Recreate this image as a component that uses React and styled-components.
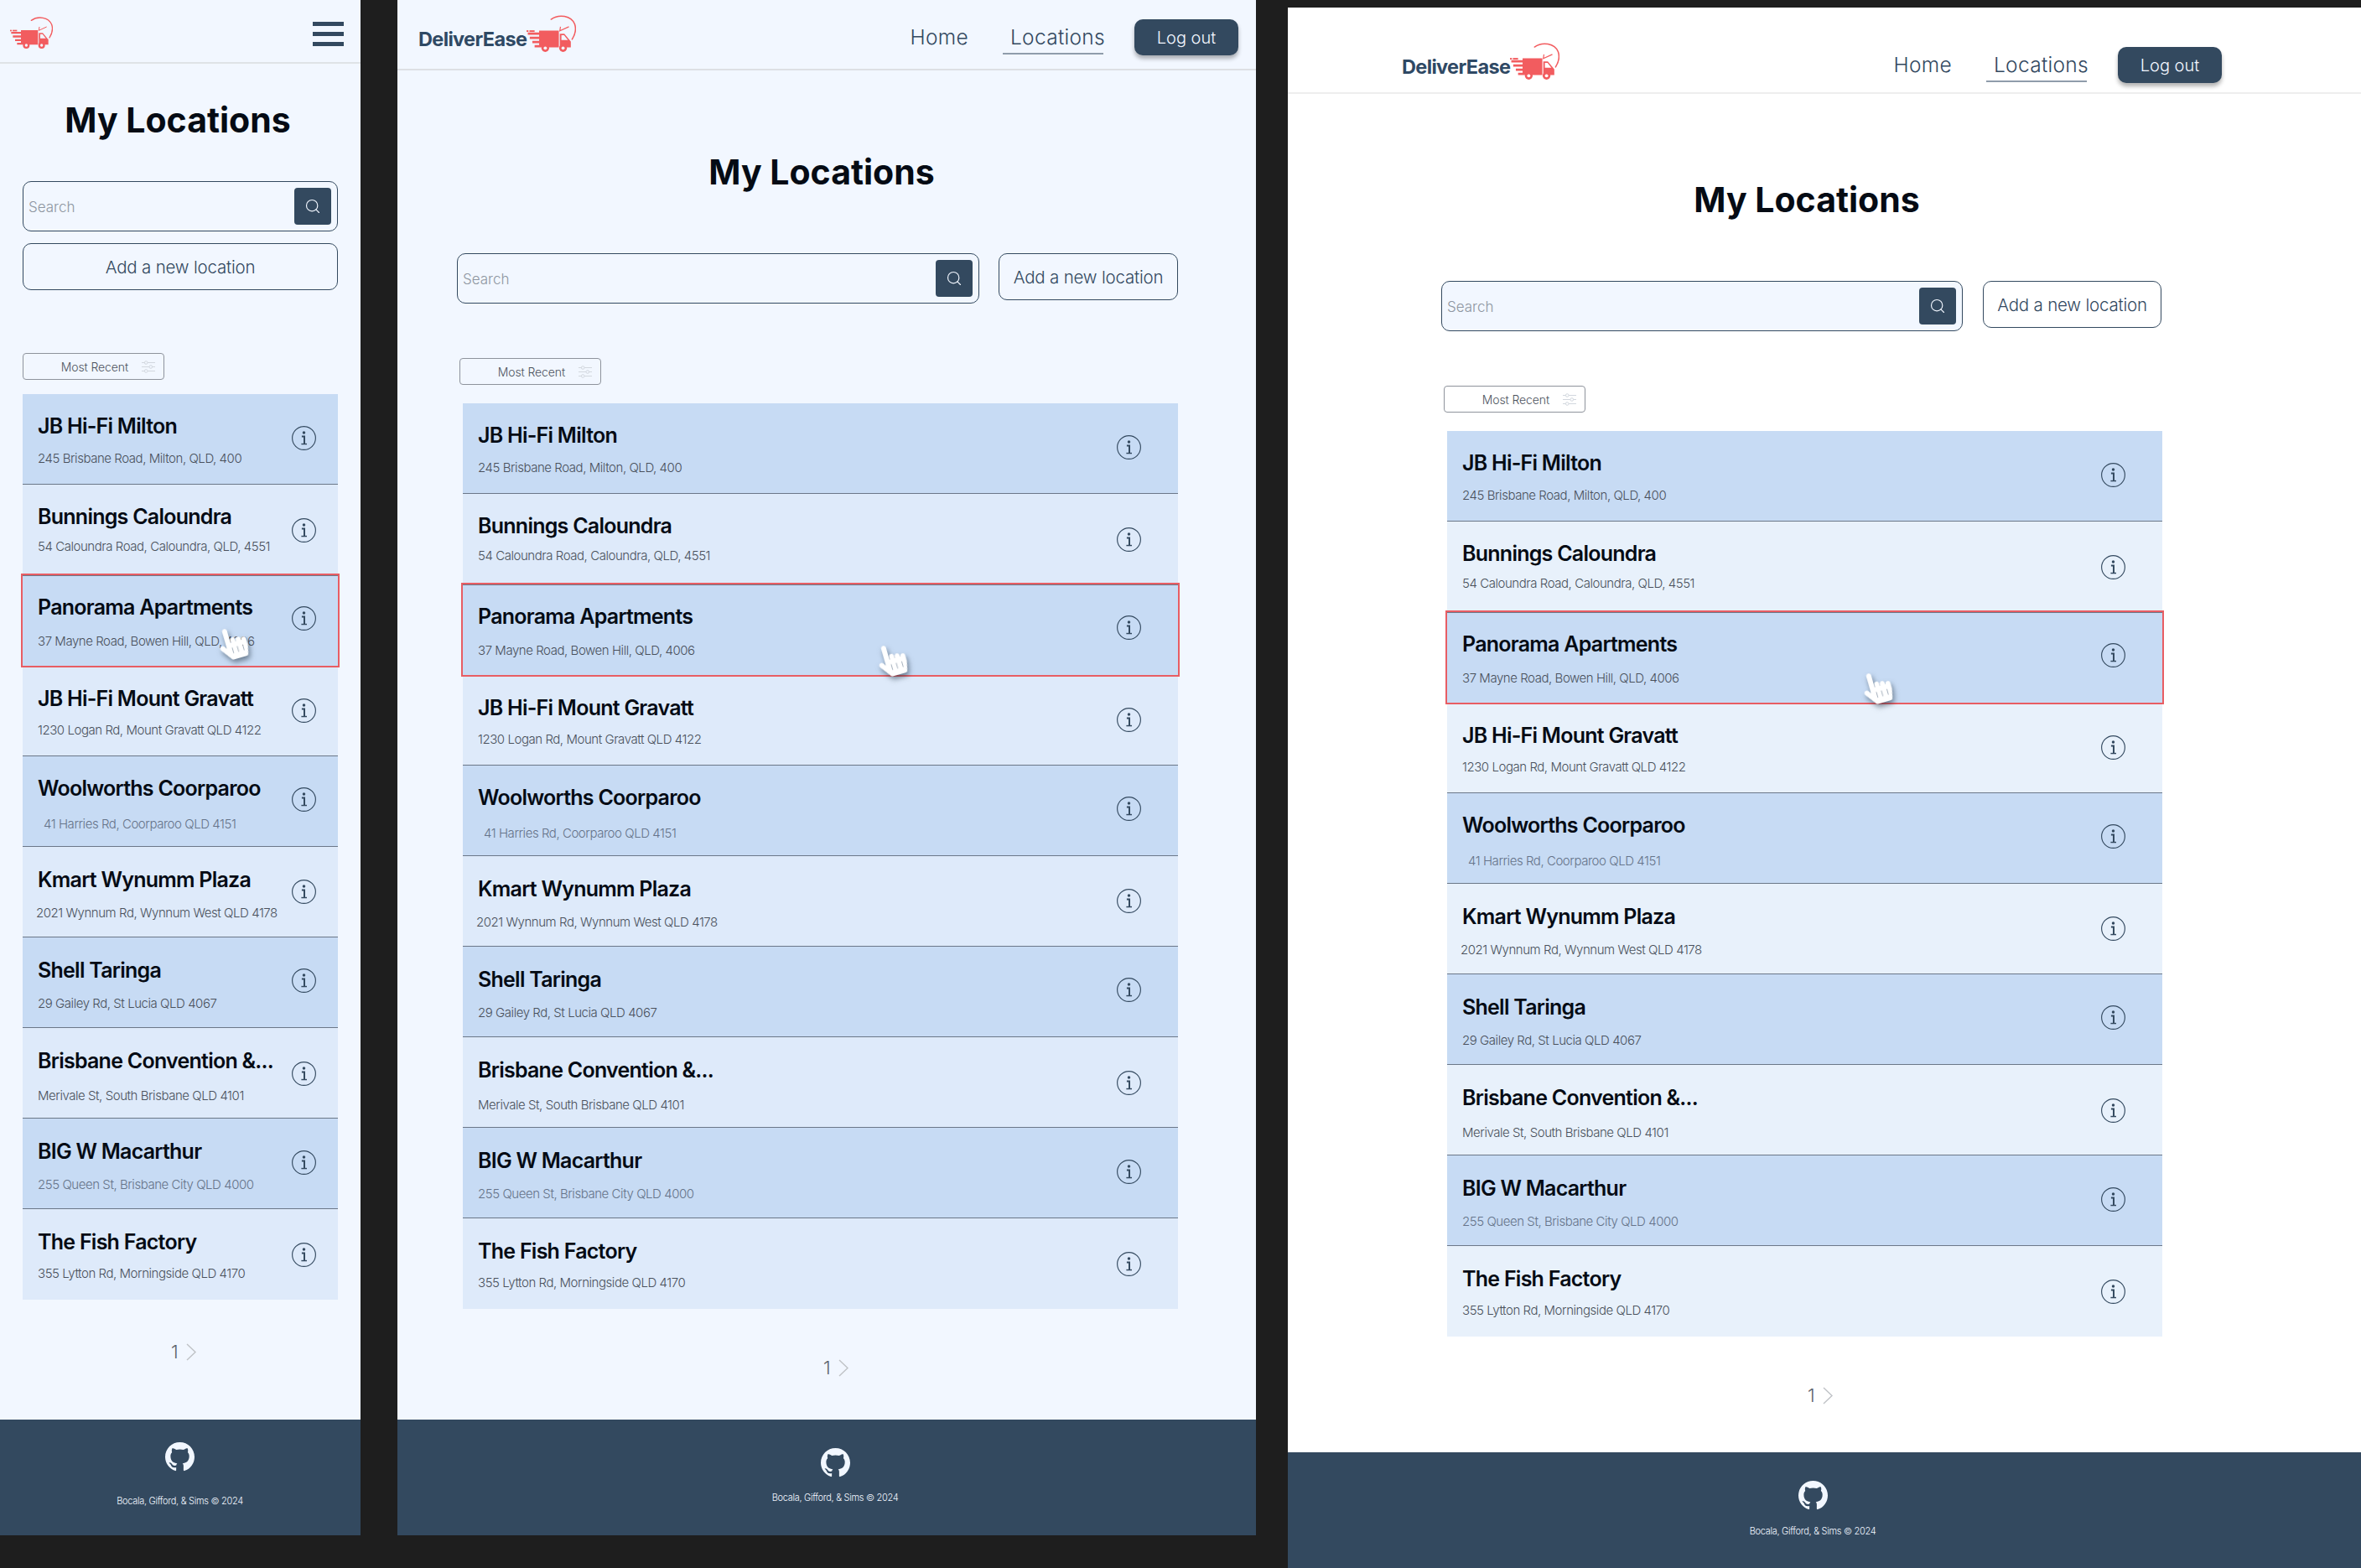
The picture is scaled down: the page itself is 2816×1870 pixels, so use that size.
import React from 'react';
import styled, { createGlobalStyle } from 'styled-components';
import { Search } from 'lucide-react';
import { BsGithub } from 'react-icons/bs';
import { FaHandPointer } from 'react-icons/fa';

const navy = '#33495f';
const red = '#f25c5f';

const GlobalStyle = createGlobalStyle`
  html, body {
    margin: 0;
    padding: 0;
    background: #1e1e1e;
  }
  * {
    box-sizing: border-box;
  }
`;

// measurements for each of the three mockups
const mobile = {
  width: 430, height: 1831, top: 0, page: '#f2f7ff', rowLight: '#deeafa', headerLine: '#dfe3e6',
  headerHeight: 74, headerTop: 20, headerLeft: 12, headerRight: 20,
  titleWidth: 424, titleGap: 37, searchGap: 43, direction: 'column', controlGap: 14,
  searchLeft: 27, searchWidth: 376, addWidth: 376,
  sortLeft: 27, sortGap: 75, listGap: 17, listLeft: 27, listWidth: 376, iconRight: 26,
  handLeft: 232, handTop: 62, pagerGap: 47, pagerLeft: 204,
  footerHeight: 138, footerTop: 27, footerGap: 27, footerLeft: 0, footerRight: 1,
};

const tablet = {
  width: 1024, height: 1831, top: 0, page: '#f2f7ff', rowLight: '#deeafa', headerLine: '#dde0e4',
  headerHeight: 82, headerTop: 23, headerLeft: 25, headerRight: 21,
  titleWidth: 1012, titleGap: 91, searchGap: 67, direction: 'row', controlGap: 23,
  searchLeft: 71, searchWidth: 623, addWidth: 214,
  sortLeft: 74, sortGap: 65, listGap: 22, listLeft: 78, listWidth: 853, iconRight: 44,
  handLeft: 493, handTop: 71, pagerGap: 55, pagerLeft: 508,
  footerHeight: 138, footerTop: 34, footerGap: 16, footerLeft: 20, footerRight: 0,
};

const desktop = {
  width: 1280, height: 1861, top: 9, page: '#ffffff', rowLight: '#e8f1fb', headerLine: '#eeeeee',
  headerHeight: 101, headerTop: 47, headerLeft: 136, headerRight: 166,
  titleWidth: 1238, titleGap: 96, searchGap: 67, direction: 'row', controlGap: 24,
  searchLeft: 183, searchWidth: 622, addWidth: 213,
  sortLeft: 186, sortGap: 65, listGap: 22, listLeft: 190, listWidth: 853, iconRight: 44,
  handLeft: 494, handTop: 71, pagerGap: 55, pagerLeft: 620,
  footerHeight: 138, footerTop: 34, footerGap: 17, footerLeft: 0, footerRight: 28,
};

const locations = [
  { name: 'JB Hi-Fi Milton', address: '245 Brisbane Road, Milton, QLD, 400', titleTop: 23, gap: 14, iconTop: 38 },
  { name: 'Bunnings Caloundra', address: '54 Caloundra Road, Caloundra, QLD, 4551', titleTop: 23, gap: 11, iconTop: 40, light: true },
  { name: 'Panorama Apartments', address: '37 Mayne Road, Bowen Hill, QLD, 4006', titleTop: 23, gap: 16, iconTop: 37, active: true },
  { name: 'JB Hi-Fi Mount Gravatt', address: '1230 Logan Rd, Mount Gravatt QLD 4122', titleTop: 24, gap: 13, iconTop: 39, light: true },
  { name: 'Woolworths Coorparoo', address: '41 Harries Rd, Coorparoo QLD 4151', titleTop: 23, gap: 18, iconTop: 37, indent: 7, muted: true },
  { name: 'Kmart Wynumm Plaza', address: '2021 Wynnum Rd, Wynnum West QLD 4178', titleTop: 24, gap: 15, iconTop: 39, indent: -2, light: true },
  { name: 'Shell Taringa', address: '29 Gailey Rd, St Lucia QLD 4067', titleTop: 24, gap: 15, iconTop: 37 },
  { name: 'Brisbane Convention &...', address: 'Merivale St, South Brisbane QLD 4101', titleTop: 24, gap: 17, iconTop: 40, light: true },
  { name: 'BIG W Macarthur', address: '255 Queen St, Brisbane City QLD 4000', titleTop: 24, gap: 15, iconTop: 38, muted: true },
  { name: 'The Fish Factory', address: '355 Lytton Rd, Morningside QLD 4170', titleTop: 24, gap: 13, iconTop: 40, light: true, last: true },
];

const Canvas = styled.div`
  display: flex;
  align-items: flex-start;
  gap: 44px;
  width: 2816px;
  height: 1870px;
  overflow: hidden;
  background: #1e1e1e;
  font-family: Inter, 'Liberation Sans', sans-serif;
`;

const Frame = styled.div`
  display: flex;
  flex-direction: column;
  flex: none;
  width: ${(p) => p.$l.width}px;
  height: ${(p) => p.$l.height}px;
  margin-top: ${(p) => p.$l.top}px;
  margin-right: ${(p) => (p.$l === mobile ? 0 : -6)}px;
  background: ${(p) => p.$l.page};
`;

const Header = styled.header`
  display: flex;
  align-items: flex-start;
  justify-content: space-between;
  flex: none;
  height: ${(p) => p.$l.headerHeight + 2}px;
  padding: ${(p) => p.$l.headerTop}px ${(p) => p.$l.headerRight}px 0 ${(p) => p.$l.headerLeft}px;
  border-bottom: 2px solid ${(p) => p.$l.headerLine};
`;

const Brand = styled.div`
  display: flex;
  align-items: flex-end;
  margin-top: ${(p) => (p.$compact ? 0 : -5)}px;
`;

const BrandName = styled.span`
  font-size: 23.5px;
  font-weight: 700;
  line-height: 30px;
  letter-spacing: -0.65px;
  color: #2f4964;
`;

const Nav = styled.nav`
  display: flex;
  align-items: center;
`;

const NavLink = styled.a`
  position: relative;
  margin-right: ${(p) => p.$gap}px;
  font-size: 24.5px;
  font-weight: 300;
  line-height: 43px;
  letter-spacing: 0.3px;
  color: ${navy};

  ${(p) => p.$current && `
    &::after {
      content: '';
      position: absolute;
      left: -9px;
      right: 2px;
      bottom: 1px;
      height: 2px;
      background: #8f9cab;
    }
  `}
`;

const LogoutButton = styled.button`
  width: 124px;
  height: 43px;
  border: none;
  border-radius: 10px;
  background: ${navy};
  box-shadow: 0 4px 5px rgba(0, 0, 0, 0.3);
  font-family: inherit;
  font-size: 20px;
  font-weight: 300;
  color: #f2f7ff;
`;

const MenuButton = styled.div`
  display: flex;
  flex-direction: column;
  gap: 7px;
  width: 37px;
  margin-top: 6px;
`;

const MenuBar = styled.span`
  height: 5px;
  background: ${navy};
`;

const Title = styled.h1`
  width: ${(p) => p.$l.titleWidth}px;
  margin: ${(p) => p.$l.titleGap}px 0 0;
  font-size: 41px;
  font-weight: 700;
  line-height: 60px;
  text-align: center;
  color: #050b14;
`;

const Controls = styled.div`
  display: flex;
  flex-direction: ${(p) => p.$l.direction};
  align-items: flex-start;
  gap: ${(p) => p.$l.controlGap}px;
  margin: ${(p) => p.$l.searchGap}px 0 0 ${(p) => p.$l.searchLeft}px;
`;

const SearchBox = styled.form`
  display: flex;
  align-items: center;
  width: ${(p) => p.$l.searchWidth}px;
  height: 60px;
  padding: 0 7px 0 6px;
  border: 1.5px solid ${navy};
  border-radius: 10px;
  background: #f2f7ff;
`;

const SearchInput = styled.input`
  flex: 1;
  min-width: 0;
  padding: 2px 0 0;
  border: none;
  outline: none;
  background: transparent;
  font-family: inherit;
  font-size: 17px;
  font-weight: 300;
  color: ${navy};

  &::placeholder {
    color: #8e96a1;
  }
`;

const SearchButton = styled.button`
  display: flex;
  align-items: center;
  justify-content: center;
  flex: none;
  width: 44px;
  height: 44px;
  padding: 0;
  border: none;
  border-radius: 4px;
  background: ${navy};
  color: #f2f7ff;
`;

const AddButton = styled.button`
  width: ${(p) => p.$l.addWidth}px;
  height: 56px;
  padding: 0;
  border: 1.5px solid ${navy};
  border-radius: 10px;
  background: transparent;
  font-family: inherit;
  font-size: 20.5px;
  font-weight: 300;
  letter-spacing: -0.2px;
  color: ${navy};
`;

const SortButton = styled.div`
  display: flex;
  align-items: center;
  justify-content: flex-end;
  gap: 16px;
  width: 169px;
  height: 32px;
  margin: ${(p) => p.$l.sortGap}px 0 0 ${(p) => p.$l.sortLeft}px;
  padding-right: 10px;
  border: 1px solid #8e939c;
  border-radius: 4px;
  font-size: 14px;
  font-weight: 300;
  letter-spacing: -0.1px;
  color: #4b525c;
`;

const List = styled.ul`
  width: ${(p) => p.$l.listWidth}px;
  margin: ${(p) => p.$l.listGap}px 0 0 ${(p) => p.$l.listLeft}px;
  padding: 0;
  list-style: none;
`;

const Row = styled.li`
  position: relative;
  display: flex;
  justify-content: space-between;
  align-items: flex-start;
  height: 108px;
  padding-left: 18px;
  padding-right: ${(p) => p.$iconRight}px;
  background: ${(p) => p.$bg};
  border-bottom: ${(p) => (p.$plain ? 'none' : '1px solid #6b7788')};

  ${(p) => p.$active && `
    z-index: 1;
    outline: 2px solid #e85d63;
    box-shadow: inset 0 1px 0 #6b7788;
  `}
`;

const RowText = styled.div`
  padding-top: ${(p) => p.$top}px;
`;

const RowTitle = styled.div`
  font-size: 25px;
  font-weight: 600;
  line-height: 30px;
  letter-spacing: -0.75px;
  white-space: nowrap;
  color: #050b14;
`;

const RowAddress = styled.div`
  margin-top: ${(p) => p.$gap}px;
  margin-left: ${(p) => p.$indent}px;
  font-size: 15px;
  font-weight: 300;
  line-height: 20px;
  letter-spacing: -0.45px;
  white-space: nowrap;
  color: ${(p) => (p.$muted ? '#66748a' : '#4a515c')};
`;

const InfoButton = styled.span`
  display: flex;
  flex: none;
  margin-top: ${(p) => p.$top}px;
  color: ${navy};
`;

const Hand = styled.span`
  position: absolute;
  left: ${(p) => p.$left}px;
  top: ${(p) => p.$top}px;
  display: flex;
  color: #ffffff;
  transform: rotate(-16deg);
  filter: drop-shadow(1px 4px 3px rgba(30, 45, 60, 0.55));
`;

const Pager = styled.div`
  display: flex;
  align-items: center;
  gap: 9px;
  height: 30px;
  margin: ${(p) => p.$l.pagerGap}px 0 0 ${(p) => p.$l.pagerLeft}px;
  font-size: 22px;
  font-weight: 300;
  color: #5f646c;
`;

const Footer = styled.footer`
  display: flex;
  flex-direction: column;
  align-items: center;
  flex: none;
  height: ${(p) => p.$l.footerHeight}px;
  margin-top: auto;
  padding: ${(p) => p.$l.footerTop}px ${(p) => p.$l.footerRight}px 0 ${(p) => p.$l.footerLeft}px;
  background: ${navy};
  color: #f2f7ff;
`;

const FooterText = styled.div`
  margin-top: ${(p) => p.$l.footerGap}px;
  font-size: 11px;
  font-weight: 300;
  line-height: 16px;
  letter-spacing: -0.3px;
`;

function TruckLogo({ width, bg }) {
  return (
    <svg width={width} viewBox="0 0 153 115" fill={red} aria-hidden="true">
      <path d="M25 48h75v52H25v-7h14v-6H18v-7h21v-6H10v-7h29v-6H4v-7h35v-6z" />
      <rect x="0" y="47" width="6" height="5" />
      <rect x="9" y="47" width="16" height="5" />
      <path d="M103 58h14l20 24v18h-34z" />
      <path d="M108 62h8l12 15h-20z" fill={bg} />
      <circle cx="58" cy="102" r="12" />
      <circle cx="58" cy="102" r="5" fill={bg} />
      <circle cx="113" cy="102" r="12" />
      <circle cx="113" cy="102" r="5" fill={bg} />
      <path d="M76 13C100 -4 138 1 149 28c5 15 1 33-8 47" fill="none" stroke={red} strokeWidth="4" strokeLinecap="round" />
      <path d="M105 36l-2 13 28-13" fill="none" stroke={red} strokeWidth="3" />
    </svg>
  );
}

function InfoIcon() {
  return (
    <svg width="29" height="29" viewBox="0 0 28 28" fill="none" stroke="currentColor" aria-hidden="true">
      <circle cx="14" cy="14" r="13.4" strokeWidth="1.1" />
      <circle cx="14" cy="7.8" r="1.7" fill="currentColor" stroke="none" />
      <path d="M11.5 12h3v8.4" strokeWidth="1.9" />
      <path d="M11 20.8h6.4" strokeWidth="1.4" />
    </svg>
  );
}

function SortIcon() {
  return (
    <svg width="16" height="15" viewBox="0 0 16 15" fill="none" stroke="#d2d7de" strokeWidth="1" aria-hidden="true">
      <path d="M0 2.5h3.5M7 2.5h9M0 7.5h9M12.5 7.5H16M0 12.5h3.5M7 12.5h9" />
      <circle cx="5.2" cy="2.5" r="1.8" />
      <circle cx="10.8" cy="7.5" r="1.8" />
      <circle cx="5.2" cy="12.5" r="1.8" />
    </svg>
  );
}

function NextIcon() {
  return (
    <svg width="12" height="21" viewBox="0 0 12 21" fill="none" stroke="#bfc2c6" strokeWidth="1.4" aria-hidden="true">
      <path d="M1 1l10 9.5L1 20" />
    </svg>
  );
}

function LocationRow({ item, l }) {
  const bg = item.light ? l.rowLight : '#c7dbf4';
  return (
    <Row $bg={bg} $iconRight={l.iconRight} $active={item.active} $plain={item.last || item.active}>
      <RowText $top={item.titleTop}>
        <RowTitle>{item.name}</RowTitle>
        <RowAddress $gap={item.gap} $indent={item.indent || 0} $muted={item.muted}>
          {item.address}
        </RowAddress>
      </RowText>
      <InfoButton $top={item.iconTop}>
        <InfoIcon />
      </InfoButton>
      {item.active && (
        <Hand $left={l.handLeft} $top={l.handTop}>
          <FaHandPointer size={38} />
        </Hand>
      )}
    </Row>
  );
}

function LocationsPage({ l }) {
  const compact = l === mobile;
  return (
    <Frame $l={l}>
      <Header $l={l}>
        <Brand $compact={compact}>
          {!compact && <BrandName>DeliverEase</BrandName>}
          <TruckLogo width={compact ? 51 : 59} bg={l.page} />
        </Brand>
        {compact ? (
          <MenuButton>
            <MenuBar />
            <MenuBar />
            <MenuBar />
          </MenuButton>
        ) : (
          <Nav>
            <NavLink $gap={50}>Home</NavLink>
            <NavLink $gap={35} $current>Locations</NavLink>
            <LogoutButton>Log out</LogoutButton>
          </Nav>
        )}
      </Header>

      <Title $l={l}>My Locations</Title>

      <Controls $l={l}>
        <SearchBox $l={l}>
          <SearchInput placeholder="Search" />
          <SearchButton type="button">
            <Search size={20} strokeWidth={1.4} />
          </SearchButton>
        </SearchBox>
        <AddButton $l={l}>Add a new location</AddButton>
      </Controls>

      <SortButton $l={l}>
        Most Recent
        <SortIcon />
      </SortButton>

      <List $l={l}>
        {locations.map((item) => (
          <LocationRow key={item.name} item={item} l={l} />
        ))}
      </List>

      <Pager $l={l}>
        1
        <NextIcon />
      </Pager>

      <Footer $l={l}>
        <BsGithub size={35} />
        <FooterText $l={l}>Bocala, Gifford, &amp; Sims © 2024</FooterText>
      </Footer>
    </Frame>
  );
}

export default function App() {
  return (
    <>
      <GlobalStyle />
      <Canvas>
        <LocationsPage l={mobile} />
        <LocationsPage l={tablet} />
        <LocationsPage l={desktop} />
      </Canvas>
    </>
  );
}
